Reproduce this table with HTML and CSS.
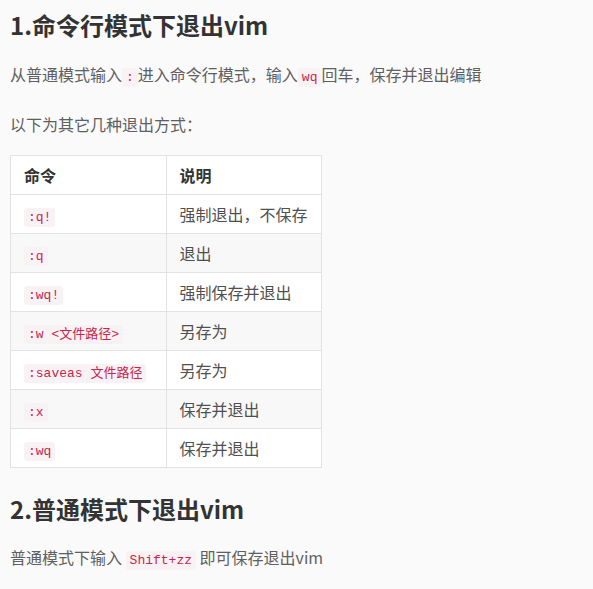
FILE: index.html
```html
<!DOCTYPE html>
<html lang="zh-CN">
<head>
    <meta charset="UTF-8">
    <title>退出vim</title>
    <link rel="stylesheet" href="styles.css">
</head>
<body>
    <h1>1.命令行模式下退出vim</h1>
    <p>从普通模式输入<code>:</code>进入命令行模式，输入<code>wq</code>回车，保存并退出编辑</p>
    <p class="intro">以下为其它几种退出方式：</p>

    <table>
        <thead>
            <tr><th>命令</th><th>说明</th></tr>
        </thead>
        <tbody>
            <tr><td><code>:q!</code></td><td>强制退出，不保存</td></tr>
            <tr><td><code>:q</code></td><td>退出</td></tr>
            <tr><td><code>:wq!</code></td><td>强制保存并退出</td></tr>
            <tr><td><code>:w &lt;文件路径&gt;</code></td><td>另存为</td></tr>
            <tr><td><code>:saveas 文件路径</code></td><td>另存为</td></tr>
            <tr><td><code>:x</code></td><td>保存并退出</td></tr>
            <tr><td><code>:wq</code></td><td>保存并退出</td></tr>
        </tbody>
    </table>

    <h2>2.普通模式下退出vim</h2>
    <p>普通模式下输入 <code>Shift+zz</code> 即可保存退出vim</p>
</body>
</html>
```

FILE: styles.css
```css
body {
    font-family: "Noto Sans CJK SC", "Noto Sans", sans-serif;
    margin: 0;
    padding: 7px 10px;
    background-color: #fafafa;
    color: #606060;
    font-size: 16px;
}
h1, h2 {
    font-size: 24px;
    line-height: 36px;
    font-weight: bold;
    color: #333;
    margin: 0 0 17px;
}
h2 {
    margin: 23px 0 16px;
}
p {
    line-height: 28px;
    margin: 0 0 22px;
}
p.intro {
    margin-bottom: 17px;
}
code {
    font-family: "Liberation Mono", "Noto Sans CJK SC", monospace;
    font-size: 13px;
    line-height: 1;
    color: #c7254e;
    background-color: #f9f2f4;
    padding: 2px 4px;
    border-radius: 3px;
}
table {
    border-collapse: collapse;
    width: 312px;
    table-layout: fixed;
}
th, td {
    border: 1px solid #e2e2e2;
    padding: 0 13px;
    height: 38px;
    line-height: 22px;
    text-align: left;
    white-space: nowrap;
    color: #505050;
}
th {
    color: #333;
    font-weight: bold;
}
thead tr,
tbody tr:nth-child(odd) {
    background-color: #fff;
}
tbody tr:nth-child(even) {
    background-color: #f8f8f8;
}
```
